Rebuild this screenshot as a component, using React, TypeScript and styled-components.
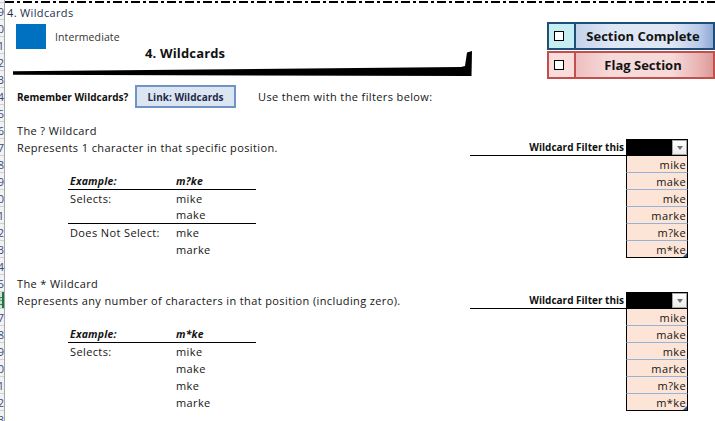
import React from 'react'
import styled, { createGlobalStyle } from 'styled-components'

const GlobalStyle = createGlobalStyle`
  html, body {
    margin: 0;
    padding: 0;
    background: #fff;
  }
  body {
    width: 715px;
    height: 421px;
    overflow: hidden;
    font-family: "Open Sans", "Noto Sans", sans-serif;
    color: #151515;
  }
`;

const Page = styled.div`
  display: flex;
  width: 715px;
  height: 421px;
  overflow: hidden;
`;

const RowHeads = styled.div`
  width: 4px;
  flex-shrink: 0;
  border-right: 1px solid #a6a6a6;
  background: #f2f2f2;
  overflow: hidden;
`;

const HeadGap = styled.div`
  height: 3px;
  box-sizing: border-box;
  border-bottom: 1px solid #d0d0d0;
`;

const RowHead = styled.div<{ $active?: boolean }>`
  width: 4px;
  height: 17px;
  box-sizing: border-box;
  border-bottom: 1px solid #d0d0d0;
  display: flex;
  justify-content: flex-end;
  align-items: center;
  white-space: nowrap;
  font-size: 11px;
  color: ${p => (p.$active ? '#217346' : '#3b4a7b')};
  background: ${p => (p.$active ? '#cfe6d7' : 'transparent')};
  box-shadow: ${p => (p.$active ? 'inset -2px 0 0 #217346' : 'none')};
`;

const Sheet = styled.div`
  flex: 1;
  min-width: 0;
  display: flex;
  flex-direction: column;
`;

const DashRule = styled.div`
  height: 2px;
  margin-top: 1px;
  background: repeating-linear-gradient(90deg, #000 0 9px, transparent 9px 12px, #000 12px 15px, transparent 15px 18px);
`;

/* ---------- header ---------- */

const Header = styled.div`
  display: flex;
  justify-content: space-between;
  height: 82px;
`;

const HeaderLeft = styled.div`
  display: flex;
  flex-direction: column;
  width: 467px;
`;

const SheetName = styled.div`
  height: 17px;
  line-height: 19px;
  padding-left: 2px;
  font-size: 11px;
  letter-spacing: 0.35px;
  color: #1f2d4d;
`;

const LevelRow = styled.div`
  display: flex;
  align-items: center;
  gap: 9px;
  margin: 4px 0 0 11px;
`;

const LevelSquare = styled.div`
  width: 30px;
  height: 25px;
  background: #0070c0;
`;

const LevelLabel = styled.span`
  font-size: 10.5px;
  letter-spacing: 0.1px;
  color: #333;
`;

const TitleBanner = styled.div`
  display: grid;
  width: 460px;
  height: 28px;
  margin-left: 8px;

  svg {
    grid-area: 1 / 1;
    align-self: end;
    display: block;
  }
`;

const BannerTitle = styled.div`
  grid-area: 1 / 1;
  align-self: start;
  margin: -2px 0 0 132px;
  font-size: 13px;
  font-weight: 700;
  line-height: 13px;
  letter-spacing: 0.15px;
  color: #111;
`;

const HeaderRight = styled.div`
  display: flex;
  flex-direction: column;
  gap: 1px;
  width: 168px;
  margin-top: 19px;
`;

type Tone = 'blue' | 'red';

const tones = {
  blue: {
    border: '#1f4e79',
    check: '#c4eef1',
    label: 'linear-gradient(90deg, #c3d2ec 0%, #dde6f5 25%, #dfe7f5 70%, #b9cbe9 90%, #8fa9d6 100%)',
  },
  red: {
    border: '#c0504d',
    check: '#fadcdc',
    label: 'linear-gradient(90deg, #eebfbf 0%, #f6d9d9 25%, #f6d9d9 70%, #eab3b3 90%, #dc9a9a 100%)',
  },
};

const ToggleButton = styled.div<{ $tone: Tone }>`
  display: flex;
  height: 28px;
  box-sizing: border-box;
  border: 2px solid ${p => tones[p.$tone].border};
`;

const CheckCell = styled.div<{ $tone: Tone }>`
  width: 27px;
  display: flex;
  align-items: center;
  padding-left: 5px;
  box-sizing: border-box;
  background: ${p => tones[p.$tone].check};
  border-right: 2px solid ${p => tones[p.$tone].border};
`;

const CheckBox = styled.div`
  width: 10px;
  height: 10px;
  box-sizing: border-box;
  border: 1px solid #000;
  background: #fff;
`;

const ToggleLabel = styled.div<{ $tone: Tone }>`
  flex: 1;
  display: flex;
  align-items: center;
  justify-content: center;
  padding-right: 3px;
  font-size: 13px;
  font-weight: 700;
  color: #141414;
  background: ${p => tones[p.$tone].label};
`;

/* ---------- link row ---------- */

const LinkRow = styled.div`
  display: flex;
  align-items: center;
  height: 23px;
  padding-left: 12px;
  margin-bottom: 14px;
`;

const LinkLabel = styled.span`
  width: 118px;
  font-size: 10px;
  font-weight: 700;
  color: #111;
`;

const LinkButton = styled.div`
  width: 101px;
  height: 23px;
  box-sizing: border-box;
  border: 2px solid #7094c8;
  background: #dce6f2;
  display: flex;
  align-items: center;
  justify-content: center;
  font-size: 10px;
  font-weight: 700;
  color: #1c2a48;
`;

const Hint = styled.span`
  margin-left: 22px;
  font-size: 11px;
  letter-spacing: 0.38px;
`;

/* ---------- sections ---------- */

const Sections = styled.div`
  display: flex;
  flex-direction: column;
  gap: 17px;
`;

const Section = styled.section`
  display: flex;
  flex-direction: column;
`;

const Line = styled.div`
  height: 17px;
  line-height: 17px;
  padding-left: 12px;
  font-size: 11px;
  letter-spacing: 0.38px;
  white-space: nowrap;
`;

const Blank = styled.div`
  height: 17px;
`;

const Body = styled.div`
  display: flex;
  justify-content: space-between;
`;

const LeftCol = styled.div`
  display: flex;
  flex-direction: column;
`;

const ExampleTable = styled.div`
  display: grid;
  grid-template-columns: 107px 81px;
  width: 188px;
  margin-left: 63px;
`;

const ExCell = styled.div<{ $head?: boolean; $rule?: boolean; $second?: boolean }>`
  height: 17px;
  box-sizing: border-box;
  padding-left: ${p => (p.$second ? '1px' : '2px')};
  line-height: ${p => (p.$head || p.$rule ? '16px' : '17px')};
  font-size: ${p => (p.$head ? '10.5px' : '11px')};
  font-weight: ${p => (p.$head ? 700 : 400)};
  font-style: ${p => (p.$head ? 'italic' : 'normal')};
  letter-spacing: ${p => (p.$head ? '0.2px' : '0.38px')};
  border-bottom: ${p => (p.$head || p.$rule ? '1px solid #000' : 'none')};
  white-space: nowrap;
`;

const FilterBox = styled.div`
  display: flex;
  flex-direction: column;
  width: 218px;
  margin-right: 27px;
`;

const FilterHeadRow = styled.div`
  display: flex;
  height: 17px;
`;

const FilterLabel = styled.div`
  flex: 1;
  box-sizing: border-box;
  border-bottom: 1px solid #000;
  text-align: right;
  padding-right: 2px;
  line-height: 17px;
  font-size: 10px;
  font-weight: 700;
  color: #111;
`;

const FilterHead = styled.div`
  width: 62px;
  box-sizing: border-box;
  padding: 1px;
  background: #000;
  display: flex;
  justify-content: flex-end;
`;

const DropButton = styled.div`
  width: 15px;
  height: 15px;
  box-sizing: border-box;
  border: 1px solid #a5a5a5;
  background: linear-gradient(#ffffff, #ececec);
  display: flex;
  align-items: center;
  justify-content: center;

  &::before {
    content: '';
    border-left: 3.5px solid transparent;
    border-right: 3.5px solid transparent;
    border-top: 4px solid #707070;
  }
`;

const FilterCells = styled.div`
  width: 62px;
  margin-left: auto;
`;

const FilterCell = styled.div<{ $last?: boolean }>`
  position: relative;
  height: 17px;
  box-sizing: border-box;
  border-left: 1px solid #000;
  border-right: 1px solid #000;
  border-bottom: 1px solid ${p => (p.$last ? '#000' : '#95b3d7')};
  background: #fce4d6;
  text-align: right;
  padding-right: 1px;
  line-height: 17px;
  font-size: 11px;
  letter-spacing: 0.38px;

  ${p =>
    p.$last &&
    `&::after {
      content: '';
      position: absolute;
      right: 0;
      bottom: 0;
      border-left: 4px solid transparent;
      border-bottom: 4px solid #2f5597;
    }`}
`;

const FILTER_VALUES = ['mike', 'make', 'mke', 'marke', 'm?ke', 'm*ke'];

type ExRow = { left: string; right: string; rule?: boolean };

type SectionData = {
  title: string;
  desc: string;
  pattern: string;
  rows: ExRow[];
};

const SECTIONS: SectionData[] = [
  {
    title: 'The ? Wildcard',
    desc: 'Represents 1 character in that specific position.',
    pattern: 'm?ke',
    rows: [
      { left: 'Selects:', right: 'mike' },
      { left: '', right: 'make', rule: true },
      { left: 'Does Not Select:', right: 'mke' },
      { left: '', right: 'marke' },
    ],
  },
  {
    title: 'The * Wildcard',
    desc: 'Represents any number of characters in that position (including zero).',
    pattern: 'm*ke',
    rows: [
      { left: 'Selects:', right: 'mike' },
      { left: '', right: 'make' },
      { left: '', right: 'mke' },
      { left: '', right: 'marke' },
    ],
  },
];

function WildcardFilter() {
  return (
    <FilterBox>
      <FilterHeadRow>
        <FilterLabel>Wildcard Filter this</FilterLabel>
        <FilterHead>
          <DropButton />
        </FilterHead>
      </FilterHeadRow>
      <FilterCells>
        {FILTER_VALUES.map((v, i) => (
          <FilterCell key={v} $last={i === FILTER_VALUES.length - 1}>{v}</FilterCell>
        ))}
      </FilterCells>
    </FilterBox>
  );
}

function WildcardSection({ data }: { data: SectionData }) {
  return (
    <Section>
      <Line>{data.title}</Line>
      <Body>
        <LeftCol>
          <Line>{data.desc}</Line>
          <Blank />
          <ExampleTable>
            <ExCell $head>Example:</ExCell>
            <ExCell $head $second>{data.pattern}</ExCell>
            {data.rows.map((r, i) => (
              <React.Fragment key={i}>
                <ExCell $rule={r.rule}>{r.left}</ExCell>
                <ExCell $rule={r.rule} $second>{r.right}</ExCell>
              </React.Fragment>
            ))}
          </ExampleTable>
        </LeftCol>
        <WildcardFilter />
      </Body>
    </Section>
  );
}

const ROW_START = 119;
const ROW_COUNT = 25;
const ACTIVE_ROW = 17;

export default function App() {
  return (
    <>
      <GlobalStyle />
      <Page>
        <RowHeads>
          <HeadGap />
          {Array.from({ length: ROW_COUNT }, (_, i) => (
            <RowHead key={i} $active={i === ACTIVE_ROW}>{ROW_START + i}</RowHead>
          ))}
        </RowHeads>

        <Sheet>
          <DashRule />

          <Header>
            <HeaderLeft>
              <SheetName>4. Wildcards</SheetName>
              <LevelRow>
                <LevelSquare />
                <LevelLabel>Intermediate</LevelLabel>
              </LevelRow>
              <TitleBanner>
                <svg width="460" height="27" viewBox="0 0 460 27">
                  <polygon points="0,21.3 448,17 452,16 454,2.5 459,1 458.5,26 0,24.8" fill="#000" />
                </svg>
                <BannerTitle>4. Wildcards</BannerTitle>
              </TitleBanner>
            </HeaderLeft>

            <HeaderRight>
              <ToggleButton $tone="blue">
                <CheckCell $tone="blue"><CheckBox /></CheckCell>
                <ToggleLabel $tone="blue">Section Complete</ToggleLabel>
              </ToggleButton>
              <ToggleButton $tone="red">
                <CheckCell $tone="red"><CheckBox /></CheckCell>
                <ToggleLabel $tone="red">Flag Section</ToggleLabel>
              </ToggleButton>
            </HeaderRight>
          </Header>

          <LinkRow>
            <LinkLabel>Remember Wildcards?</LinkLabel>
            <LinkButton>Link: Wildcards</LinkButton>
            <Hint>Use them with the filters below:</Hint>
          </LinkRow>

          <Sections>
            {SECTIONS.map(s => (
              <WildcardSection key={s.title} data={s} />
            ))}
          </Sections>
        </Sheet>
      </Page>
    </>
  );
}
